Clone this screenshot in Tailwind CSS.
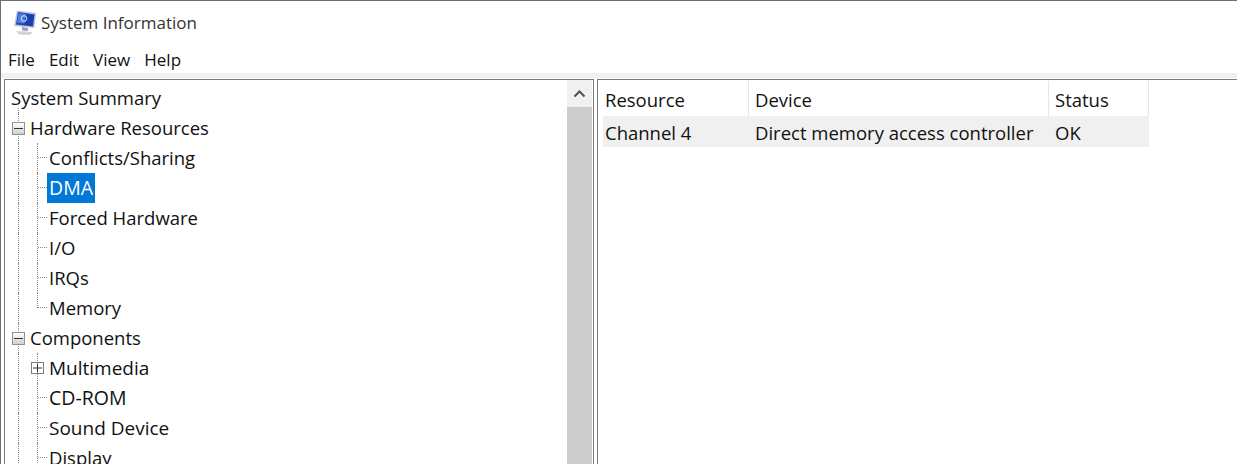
<!DOCTYPE html>
<html lang="en">
<head>
  <meta charset="UTF-8" />
  <title>System Information</title>
  <script src="https://cdn.jsdelivr.net/npm/@tailwindcss/browser@4"></script>
</head>
<body class="bg-white text-[#111] font-['Open_Sans',sans-serif] text-[18.5px] overflow-hidden">
  <div class="h-[464px] w-[1237px] flex flex-col border-t border-l border-[#6e6e6e] overflow-hidden">

    <!-- Title bar -->
    <header class="h-[44px] flex items-center pl-[12px] gap-[4px] shrink-0">
      <svg width="24" height="26" viewBox="0 0 24 26">
        <path d="M4 0.5 L23 3 L21.5 18 L1 16 Z" fill="#b9c6de"/>
        <path d="M5 2 L21.5 4.5 L20 16.5 L3 14.5 Z" fill="#1f3fae"/>
        <path d="M5.5 3 L13 4 L11.5 13.5 L4 13 Z" fill="#4a7fe0"/>
        <circle cx="11" cy="8.5" r="2.8" fill="none" stroke="#dbe6fa" stroke-width="1"/>
        <path d="M9 17 L15 18 L15 21 L9 20.5 Z" fill="#9aa3b2"/>
        <path d="M3 21 L20 22 L17 25 L6 24.5 Z" fill="#cfd3d9"/>
      </svg>
      <span class="text-[17px] text-[#333]">System Information</span>
    </header>

    <!-- Menu -->
    <nav class="h-[28px] flex items-center pl-[7px] pt-[2px] gap-[14px] text-[17px] shrink-0">
      <span>File</span><span>Edit</span><span>View</span><span>Help</span>
    </nav>
    <div class="h-[5px] bg-[#f0f0f0] shrink-0"></div>

    <!-- Panes -->
    <main class="flex-1 flex min-h-0 pl-[3px] pt-[1px] gap-[3px]">

      <!-- Tree -->
      <section class="w-[590px] flex border border-[#7a7a7a] border-b-0 shrink-0">
        <div class="flex-1 pt-[3px] overflow-hidden">
          <div class="h-[30px] flex items-center pl-[6px] relative">
            System Summary
            <span class="absolute left-[13px] bottom-0 h-[5px] border-l border-dotted border-[#888]"></span>
          </div>

          <div class="h-[30px] flex items-center pl-[7px] relative">
            <span class="absolute left-[13px] top-0 h-full border-l border-dotted border-[#888]"></span>
            <span class="relative w-[13px] h-[13px] border border-[#919191] bg-gradient-to-b from-white to-[#cfcfcf] flex items-center justify-center"><span class="w-[9px] h-px bg-[#333]"></span></span>
            <span class="ml-[5px]">Hardware Resources</span>
          </div>

          <div class="h-[30px] flex pl-[13px]">
            <span class="w-[19px] border-l border-dotted border-[#888]"></span>
            <span class="w-[10px] border-l border-dotted border-[#888]"><span class="block h-[15px] border-b border-dotted border-[#888]"></span></span>
            <span class="px-[2px] leading-[30px]">Conflicts/Sharing</span>
          </div>
          <div class="h-[30px] flex pl-[13px]">
            <span class="w-[19px] border-l border-dotted border-[#888]"></span>
            <span class="w-[10px] border-l border-dotted border-[#888]"><span class="block h-[15px] border-b border-dotted border-[#888]"></span></span>
            <span class="pl-[2px] pr-[2px] leading-[29px] text-[19.5px] bg-[#0078d7] text-white">DMA</span>
          </div>
          <div class="h-[30px] flex pl-[13px]">
            <span class="w-[19px] border-l border-dotted border-[#888]"></span>
            <span class="w-[10px] border-l border-dotted border-[#888]"><span class="block h-[15px] border-b border-dotted border-[#888]"></span></span>
            <span class="px-[2px] leading-[30px]">Forced Hardware</span>
          </div>
          <div class="h-[30px] flex pl-[13px]">
            <span class="w-[19px] border-l border-dotted border-[#888]"></span>
            <span class="w-[10px] border-l border-dotted border-[#888]"><span class="block h-[15px] border-b border-dotted border-[#888]"></span></span>
            <span class="px-[2px] leading-[30px]">I/O</span>
          </div>
          <div class="h-[30px] flex pl-[13px]">
            <span class="w-[19px] border-l border-dotted border-[#888]"></span>
            <span class="w-[10px] border-l border-dotted border-[#888]"><span class="block h-[15px] border-b border-dotted border-[#888]"></span></span>
            <span class="px-[2px] leading-[30px]">IRQs</span>
          </div>
          <div class="h-[30px] flex pl-[13px]">
            <span class="w-[19px] border-l border-dotted border-[#888]"></span>
            <span class="w-[10px] h-[15px] border-l border-b border-dotted border-[#888]"></span>
            <span class="px-[2px] leading-[30px]">Memory</span>
          </div>

          <div class="h-[30px] flex items-center pl-[7px] relative">
            <span class="absolute left-[13px] top-0 h-full border-l border-dotted border-[#888]"></span>
            <span class="relative w-[13px] h-[13px] border border-[#919191] bg-gradient-to-b from-white to-[#cfcfcf] flex items-center justify-center"><span class="w-[9px] h-px bg-[#333]"></span></span>
            <span class="ml-[5px]">Components</span>
          </div>

          <div class="h-[30px] flex pl-[13px]">
            <span class="w-[19px] border-l border-dotted border-[#888]"></span>
            <span class="w-[10px] h-[30px] relative border-l border-dotted border-[#888]">
              <span class="absolute left-[-7px] top-[9px] w-[13px] h-[12px] border border-[#7d7d7d] bg-white flex items-center justify-center">
                <svg width="11" height="10" viewBox="0 0 11 10"><path d="M1 5 H10 M5.5 0.5 V9.5" stroke="#333" stroke-width="1"/></svg>
              </span>
            </span>
            <span class="px-[2px] leading-[30px] text-[19px]">Multimedia</span>
          </div>
          <div class="h-[30px] flex pl-[13px]">
            <span class="w-[19px] border-l border-dotted border-[#888]"></span>
            <span class="w-[10px] border-l border-dotted border-[#888]"><span class="block h-[15px] border-b border-dotted border-[#888]"></span></span>
            <span class="px-[2px] leading-[30px] text-[19.5px]">CD-ROM</span>
          </div>
          <div class="h-[30px] flex pl-[13px]">
            <span class="w-[19px] border-l border-dotted border-[#888]"></span>
            <span class="w-[10px] border-l border-dotted border-[#888]"><span class="block h-[15px] border-b border-dotted border-[#888]"></span></span>
            <span class="px-[2px] leading-[30px] text-[19px]">Sound Device</span>
          </div>
          <div class="h-[30px] flex pl-[13px]">
            <span class="w-[19px] border-l border-dotted border-[#888]"></span>
            <span class="w-[10px] border-l border-dotted border-[#888]"><span class="block h-[15px] border-b border-dotted border-[#888]"></span></span>
            <span class="px-[2px] leading-[30px]">Display</span>
          </div>
        </div>

        <!-- Scrollbar -->
        <div class="w-[25px] flex flex-col shrink-0 mr-px">
          <div class="h-[27px] bg-[#f0f0f0] flex items-center justify-center">
            <svg width="13" height="9" viewBox="0 0 13 9"><path d="M1.5 7.5 L6.5 2.5 L11.5 7.5" fill="none" stroke="#505050" stroke-width="2"/></svg>
          </div>
          <div class="flex-1 bg-[#cdcdcd]"></div>
        </div>
      </section>

      <!-- Results -->
      <section class="flex-1 border-t border-l border-[#7a7a7a] pl-[5px] pt-[1px]">
        <div class="w-[546px] grid grid-cols-[146px_300px_100px]">
          <div class="h-[35px] flex items-center pl-[2px] pt-[3px] border-r border-[#e5e5e5]">Resource</div>
          <div class="h-[35px] flex items-center pl-[6px] pt-[3px] border-r border-[#e5e5e5]">Device</div>
          <div class="h-[35px] flex items-center pl-[6px] pt-[3px] border-r border-[#e5e5e5]">Status</div>
          <div class="h-[31px] flex items-center pl-[2px] pt-[3px] bg-[#f0f0f0]">Channel 4</div>
          <div class="h-[31px] flex items-center pl-[6px] pt-[3px] bg-[#f0f0f0]">Direct memory access controller</div>
          <div class="h-[31px] flex items-center pl-[6px] pt-[3px] bg-[#f0f0f0]">OK</div>
        </div>
      </section>
    </main>
  </div>
</body>
</html>
